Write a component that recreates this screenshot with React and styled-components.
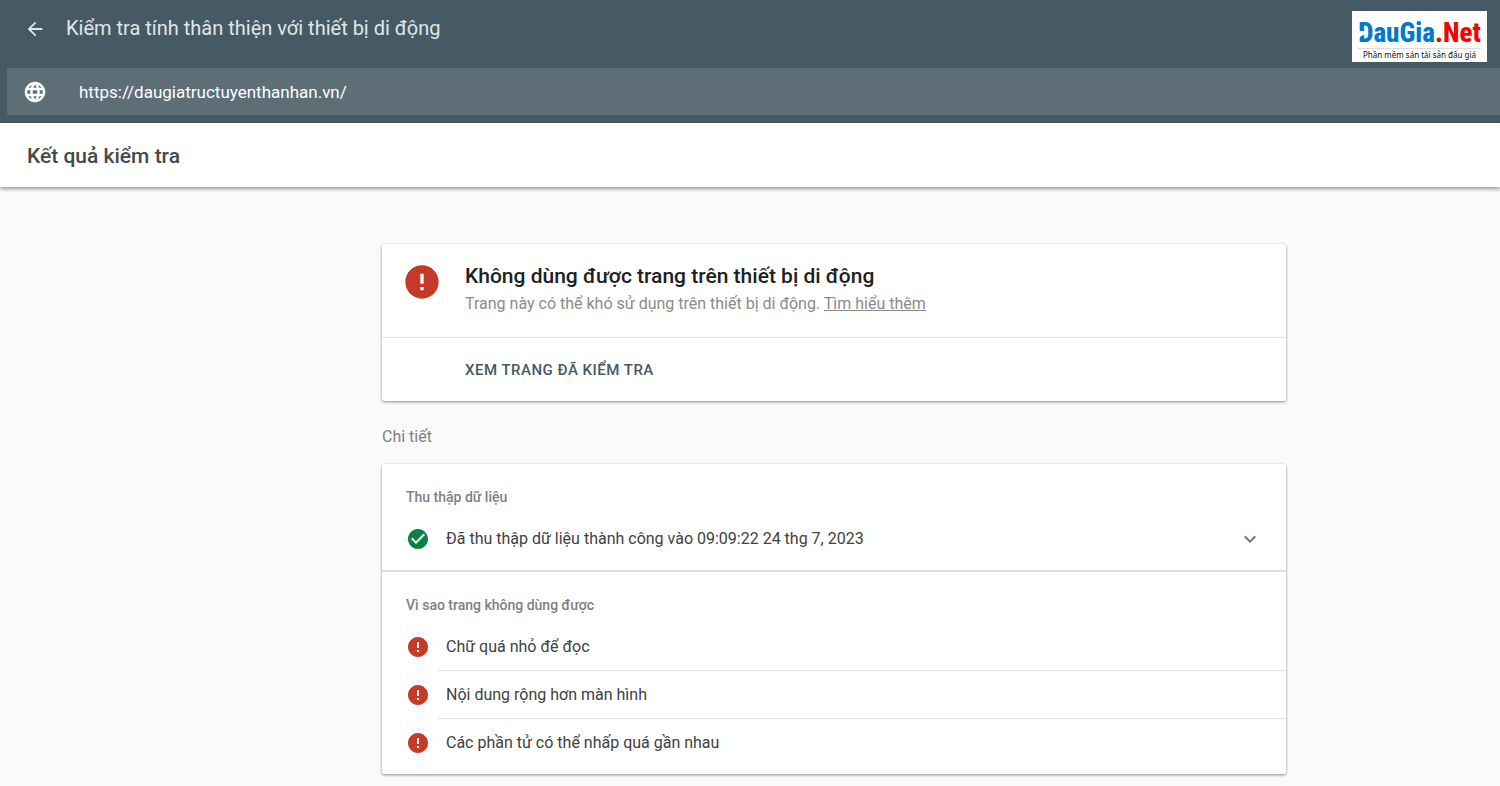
import React, { useState } from "react";
import styled, { createGlobalStyle } from "styled-components";
import {
  MdArrowBack,
  MdCheckCircle,
  MdError,
  MdExpandMore,
  MdLanguage,
} from "react-icons/md";

const GlobalStyle = createGlobalStyle`
  * {
    box-sizing: border-box;
  }

  body {
    margin: 0;
    background-color: #fafafa;
    font-family: Roboto, "Noto Sans", sans-serif;
    color: #414141;
  }
`;

const Header = styled.header`
  background-color: #455a64;
  padding: 0 0 8px 7px;
`;

const HeaderTop = styled.div`
  display: flex;
  align-items: flex-start;
  justify-content: space-between;
  height: 68px;
  padding: 11px 13px 0 17px;
`;

const HeaderTitle = styled.div`
  display: flex;
  align-items: center;
  gap: 20px;
  padding-top: 1px;
`;

const IconButton = styled.button`
  display: flex;
  padding: 0;
  border: none;
  background: none;
  color: #e1e6e8;
  font-size: 22px;
  cursor: pointer;
`;

const AppName = styled.h1`
  margin: 0;
  color: #e1e6e8;
  font-size: 20px;
  font-weight: 400;
  line-height: 33px;
`;

const Logo = styled.a`
  display: flex;
  flex-direction: column;
  align-items: center;
  width: 135px;
  height: 51px;
  padding-top: 8px;
  background-color: #ffffff;
  text-decoration: none;
  white-space: nowrap;
`;

const LogoName = styled.span`
  position: relative;
  color: #0078d0;
  border-bottom: 1px solid #dddddd;
  font-family: "Roboto Condensed", Roboto, sans-serif;
  font-size: 27px;
  font-weight: 800;
  line-height: 29px;

  /* notch cut into the stem of the D */
  &::before {
    content: "";
    position: absolute;
    top: 12px;
    left: 0;
    width: 8px;
    height: 7px;
    background-color: #ffffff;
    clip-path: polygon(0 0, 100% 0, 70% 55%, 0 100%);
  }
`;

const LogoAccent = styled.span`
  color: #f80000;
`;

const LogoTagline = styled.span`
  color: #111111;
  font-family: "Noto Sans", sans-serif;
  font-size: 8px;
  line-height: 12px;
`;

const UrlBar = styled.label`
  display: flex;
  align-items: center;
  gap: 32px;
  height: 47px;
  padding-left: 16px;
  border-radius: 2px 0 0 2px;
  background-color: #5d6e77;
  color: #ffffff;
  font-size: 24px;
`;

const GlobeIcon = styled(MdLanguage)`
  path:last-child {
    stroke: #ffffff;
    stroke-width: 0.5px;
  }
`;

const UrlInput = styled.input`
  flex: 1;
  padding: 0;
  border: none;
  outline: none;
  background: none;
  color: #ffffff;
  font-family: inherit;
  font-size: 17px;
`;

const ResultBar = styled.div`
  padding: 17px 27px 15px;
  background-color: #ffffff;
  box-shadow: 0 2px 4px rgba(0, 0, 0, 0.4);
`;

const ResultTitle = styled.h2`
  margin: 0;
  color: #484848;
  font-size: 21px;
  font-weight: 500;
  line-height: 32px;
`;

const Main = styled.main`
  padding: 57px 24px 12px 192px;
`;

const Content = styled.div`
  max-width: 904px;
  margin: 0 auto;
`;

const Card = styled.section`
  border-radius: 2px;
  background-color: #ffffff;
  box-shadow: 0 1px 3px rgba(0, 0, 0, 0.45);
`;

const Verdict = styled.div`
  display: flex;
  gap: 23px;
  height: 94px;
  padding: 18px 20px;
  border-bottom: 1px solid #e4e4e4;
`;

const VerdictTitle = styled.h3`
  margin: 0;
  color: #212121;
  font-size: 21px;
  font-weight: 500;
  line-height: 28px;
`;

const VerdictText = styled.p`
  margin: 0;
  color: #8b8b8b;
  font-size: 16px;
  line-height: 28px;

  a {
    color: inherit;
  }
`;

const CardActions = styled.div`
  padding: 16px 83px 15px;
`;

const ActionButton = styled.button`
  padding: 0;
  border: none;
  background: none;
  color: #455a64;
  font-family: inherit;
  font-size: 15px;
  font-weight: 500;
  line-height: 32px;
  letter-spacing: 0.5px;
  text-transform: uppercase;
  cursor: pointer;
`;

const SectionLabel = styled.h2`
  margin: 0;
  padding: 20px 0 11px;
  color: #808080;
  font-size: 16px;
  font-weight: 400;
  line-height: 32px;
`;

const Group = styled.div`
  padding: 17px 0 8px;

  & + & {
    border-top: 2px solid #dfdfdf;
  }
`;

const GroupTitle = styled.h3`
  margin: 0 0 2px 24px;
  color: #808080;
  font-size: 14px;
  font-weight: 500;
  line-height: 32px;
`;

const List = styled.ul`
  margin: 0;
  padding: 0;
  list-style: none;
`;

const StatusIcon = styled.span`
  display: flex;
  flex: none;
  color: ${(props) => (props.$ok ? "#0b8043" : "#c53929")};
  font-size: ${(props) => (props.$large ? "40px" : "24px")};
`;

const Issue = styled.li`
  display: flex;
  align-items: center;
  gap: 8px;
  padding-left: 24px;

  &:last-child > span:last-child {
    border-bottom: none;
  }
`;

const IssueText = styled.span`
  flex: 1;
  padding-left: 8px;
  border-bottom: 1px solid #e4e4e4;
  font-size: 16px;
  line-height: 47px;
`;

const CrawlButton = styled.button`
  display: flex;
  align-items: center;
  gap: 16px;
  width: 100%;
  padding: 0 24px;
  border: none;
  background: none;
  color: inherit;
  font-family: inherit;
  font-size: 16px;
  line-height: 47px;
  text-align: left;
  cursor: pointer;
`;

const CrawlText = styled.span`
  flex: 1;
`;

const Chevron = styled.span`
  display: flex;
  color: #757575;
  font-size: 24px;
`;

const issues = [
  "Chữ quá nhỏ để đọc",
  "Nội dung rộng hơn màn hình",
  "Các phần tử có thể nhấp quá gần nhau",
];

const App = () => {
  const [url, setUrl] = useState("https://daugiatructuyenthanhan.vn/");

  return (
    <>
      <GlobalStyle />
      <Header>
        <HeaderTop>
          <HeaderTitle>
            <IconButton type="button" aria-label="Quay lại">
              <MdArrowBack />
            </IconButton>
            <AppName>Kiểm tra tính thân thiện với thiết bị di động</AppName>
          </HeaderTitle>
          <Logo href="#">
            <LogoName>
              DauGia<LogoAccent>.Net</LogoAccent>
            </LogoName>
            <LogoTagline>Phần mềm sán tài sản đấu giá</LogoTagline>
          </Logo>
        </HeaderTop>
        <UrlBar>
          <GlobeIcon />
          <UrlInput
            type="text"
            aria-label="URL"
            value={url}
            onChange={(e) => setUrl(e.target.value)}
          />
        </UrlBar>
      </Header>
      <ResultBar>
        <ResultTitle>Kết quả kiểm tra</ResultTitle>
      </ResultBar>
      <Main>
        <Content>
          <Card>
            <Verdict>
              <StatusIcon $large>
                <MdError />
              </StatusIcon>
              <div>
                <VerdictTitle>
                  Không dùng được trang trên thiết bị di động
                </VerdictTitle>
                <VerdictText>
                  Trang này có thể khó sử dụng trên thiết bị di động.{" "}
                  <a href="#">Tìm hiểu thêm</a>
                </VerdictText>
              </div>
            </Verdict>
            <CardActions>
              <ActionButton type="button">Xem trang đã kiểm tra</ActionButton>
            </CardActions>
          </Card>
          <SectionLabel>Chi tiết</SectionLabel>
          <Card>
            <Group>
              <GroupTitle>Thu thập dữ liệu</GroupTitle>
              <CrawlButton type="button">
                <StatusIcon $ok>
                  <MdCheckCircle />
                </StatusIcon>
                <CrawlText>
                  Đã thu thập dữ liệu thành công vào 09:09:22 24 thg 7, 2023
                </CrawlText>
                <Chevron>
                  <MdExpandMore />
                </Chevron>
              </CrawlButton>
            </Group>
            <Group>
              <GroupTitle>Vì sao trang không dùng được</GroupTitle>
              <List>
                {issues.map((issue) => (
                  <Issue key={issue}>
                    <StatusIcon>
                      <MdError />
                    </StatusIcon>
                    <IssueText>{issue}</IssueText>
                  </Issue>
                ))}
              </List>
            </Group>
          </Card>
        </Content>
      </Main>
    </>
  );
};

export default App;
